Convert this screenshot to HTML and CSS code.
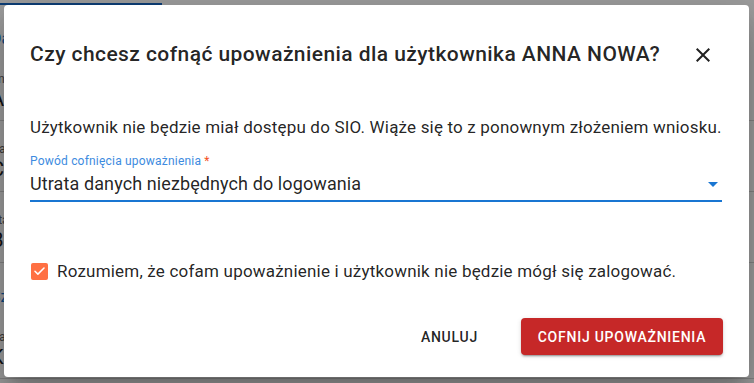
FILE: index.html
```html
<!DOCTYPE html>
<html lang="pl">
<head>
<meta charset="utf-8">
<title>Cofnij upoważnienie</title>
<link rel="stylesheet" href="styles.css">
</head>
<body>
<div class="page">
  <div class="tabbar"><span class="tab-indicator"></span></div>
  <div class="section-link">Dane</div>
  <div class="row">
    <div class="row-label">Imię</div>
    <div class="row-value">ANNA</div>
  </div>
  <div class="row">
    <div class="row-label">Data</div>
    <div class="row-value">CC</div>
  </div>
  <div class="row">
    <div class="row-label">Status</div>
    <div class="row-value">BB</div>
  </div>
  <div class="section-link">Szczegóły</div>
  <div class="row">
    <div class="row-label">Data</div>
    <div class="row-value">Kk</div>
  </div>
</div>
<div class="overlay"></div>
<div class="dialog" role="dialog">
  <div class="dialog-header">
    <h2 class="dialog-title">Czy chcesz cofnąć upoważnienia dla użytkownika ANNA NOWA?</h2>
    <button class="close-btn" aria-label="Zamknij">
      <svg width="24" height="24" viewBox="0 0 24 24"><path d="M19 6.41 17.59 5 12 10.59 6.41 5 5 6.41 10.59 12 5 17.59 6.41 19 12 13.41 17.59 19 19 17.59 13.41 12z" fill="#212121"/></svg>
    </button>
  </div>
  <p class="dialog-text">Użytkownik nie będzie miał dostępu do SIO. Wiąże się to z ponownym złożeniem wniosku.</p>
  <div class="field">
    <div class="field-label">Powód cofnięcia upoważnienia <span class="req">*</span></div>
    <div class="field-input">
      <span class="field-value">Utrata danych niezbędnych do logowania</span>
      <svg class="arrow" width="24" height="24" viewBox="0 0 24 24"><path d="M7 10l5 5 5-5z" fill="#1976d2"/></svg>
    </div>
  </div>
  <label class="check-row">
    <span class="checkbox">
      <svg width="18" height="18" viewBox="0 0 18 18"><path d="M4.2 9.3 7.3 12.3 13.8 5.8" fill="none" stroke="#fff" stroke-width="1.6" stroke-linecap="round" stroke-linejoin="round"/></svg>
    </span>
    <span class="check-label">Rozumiem, że cofam upoważnienie i użytkownik nie będzie mógł się zalogować.</span>
  </label>
  <div class="actions">
    <button class="btn btn-text">Anuluj</button>
    <button class="btn btn-danger">Cofnij upoważnienia</button>
  </div>
</div>
</body>
</html>
```
FILE: styles.css
```css
html, body {
  margin: 0;
  padding: 0;
}
body {
  width: 754px;
  height: 383px;
  overflow: hidden;
  background: #fff;
  font-family: Roboto, "Noto Sans", Arial, sans-serif;
  position: relative;
}
.page {
  margin-left: -9px;
  width: 780px;
}
.tabbar {
  height: 5px;
  display: flex;
  align-items: flex-end;
}
.tab-indicator {
  display: block;
  width: 171px;
  height: 2px;
  background: #1565c0;
}
.section-link {
  color: #1976d2;
  font-size: 16px;
  line-height: 24px;
  padding: 22px 0 0 0;
  height: 46px;
  box-sizing: border-box;
}
.row {
  border-bottom: 1px solid #d6d6d6;
  height: 71px;
  box-sizing: border-box;
  padding-top: 20px;
}
.section-link + .row {
  height: 70px;
  padding-top: 20px;
}
.row-label {
  font-size: 12px;
  line-height: 16px;
  color: #666;
}
.row-value {
  font-size: 20px;
  line-height: 24px;
  color: #212121;
}
.overlay {
  position: absolute;
  inset: 0;
  background: rgba(0, 0, 0, 0.38);
}
.dialog {
  position: absolute;
  left: 4px;
  top: 5px;
  width: 745px;
  height: 372px;
  box-sizing: border-box;
  background: #fff;
  border-radius: 4px;
  box-shadow: 0 11px 15px -7px rgba(0,0,0,.2), 0 24px 38px 3px rgba(0,0,0,.14), 0 9px 46px 8px rgba(0,0,0,.12);
  padding: 26px 26px 0 26px;
  display: flex;
  flex-direction: column;
  color: rgba(0, 0, 0, 0.87);
}
.dialog-header {
  display: flex;
  align-items: center;
  justify-content: space-between;
}
.dialog-title {
  margin: 0;
  font-size: 21px;
  line-height: 32px;
  font-weight: 500;
  letter-spacing: 0.43px;
  padding-top: 2px;
}
.close-btn {
  width: 40px;
  height: 40px;
  border: 0;
  background: transparent;
  padding: 0;
  display: flex;
  align-items: center;
  justify-content: center;
  margin-top: 4px;
}
.dialog-text {
  margin: 40px -10px 0 0;
  font-size: 17px;
  line-height: 24px;
  letter-spacing: 0.18px;
  white-space: nowrap;
}
.field {
  margin-top: 14px;
  border-bottom: 2px solid #1976d2;
  width: 692px;
}
.field-label {
  font-size: 12px;
  line-height: 16px;
  color: #3d8be0;
  letter-spacing: 0.2px;
}
.req {
  color: #f4511e;
}
.field-input {
  display: flex;
  align-items: center;
  justify-content: space-between;
  height: 30px;
  padding-bottom: 1px;
}
.field-value {
  font-size: 18px;
  line-height: 24px;
  letter-spacing: 0.1px;
}
.arrow {
  margin-right: -3px;
}
.check-row {
  margin-top: 57px;
  display: flex;
  align-items: center;
  gap: 9px;
  margin-left: 1px;
}
.checkbox {
  width: 17px;
  height: 17px;
  border-radius: 2px;
  background: #ff7043;
  display: flex;
  align-items: center;
  justify-content: center;
}
.check-label {
  font-size: 17px;
  line-height: 24px;
  letter-spacing: 0.2px;
}
.actions {
  margin-top: 35px;
  display: flex;
  justify-content: flex-end;
  align-items: center;
  gap: 27px;
}
.btn {
  font-family: Roboto, Arial, sans-serif;
  font-size: 14px;
  font-weight: 500;
  text-transform: uppercase;
  letter-spacing: 0.75px;
  border: 0;
  border-radius: 4px;
  height: 37px;
  padding: 0 16px;
  cursor: pointer;
}
.btn-text {
  background: transparent;
  color: rgba(0, 0, 0, 0.87);
  padding: 0 16px;
}
.btn-danger {
  background: #c62828;
  color: #fff;
  width: 202px;
  box-shadow: 0 3px 1px -2px rgba(0,0,0,.2), 0 2px 2px 0 rgba(0,0,0,.14), 0 1px 5px 0 rgba(0,0,0,.12);
}
```
